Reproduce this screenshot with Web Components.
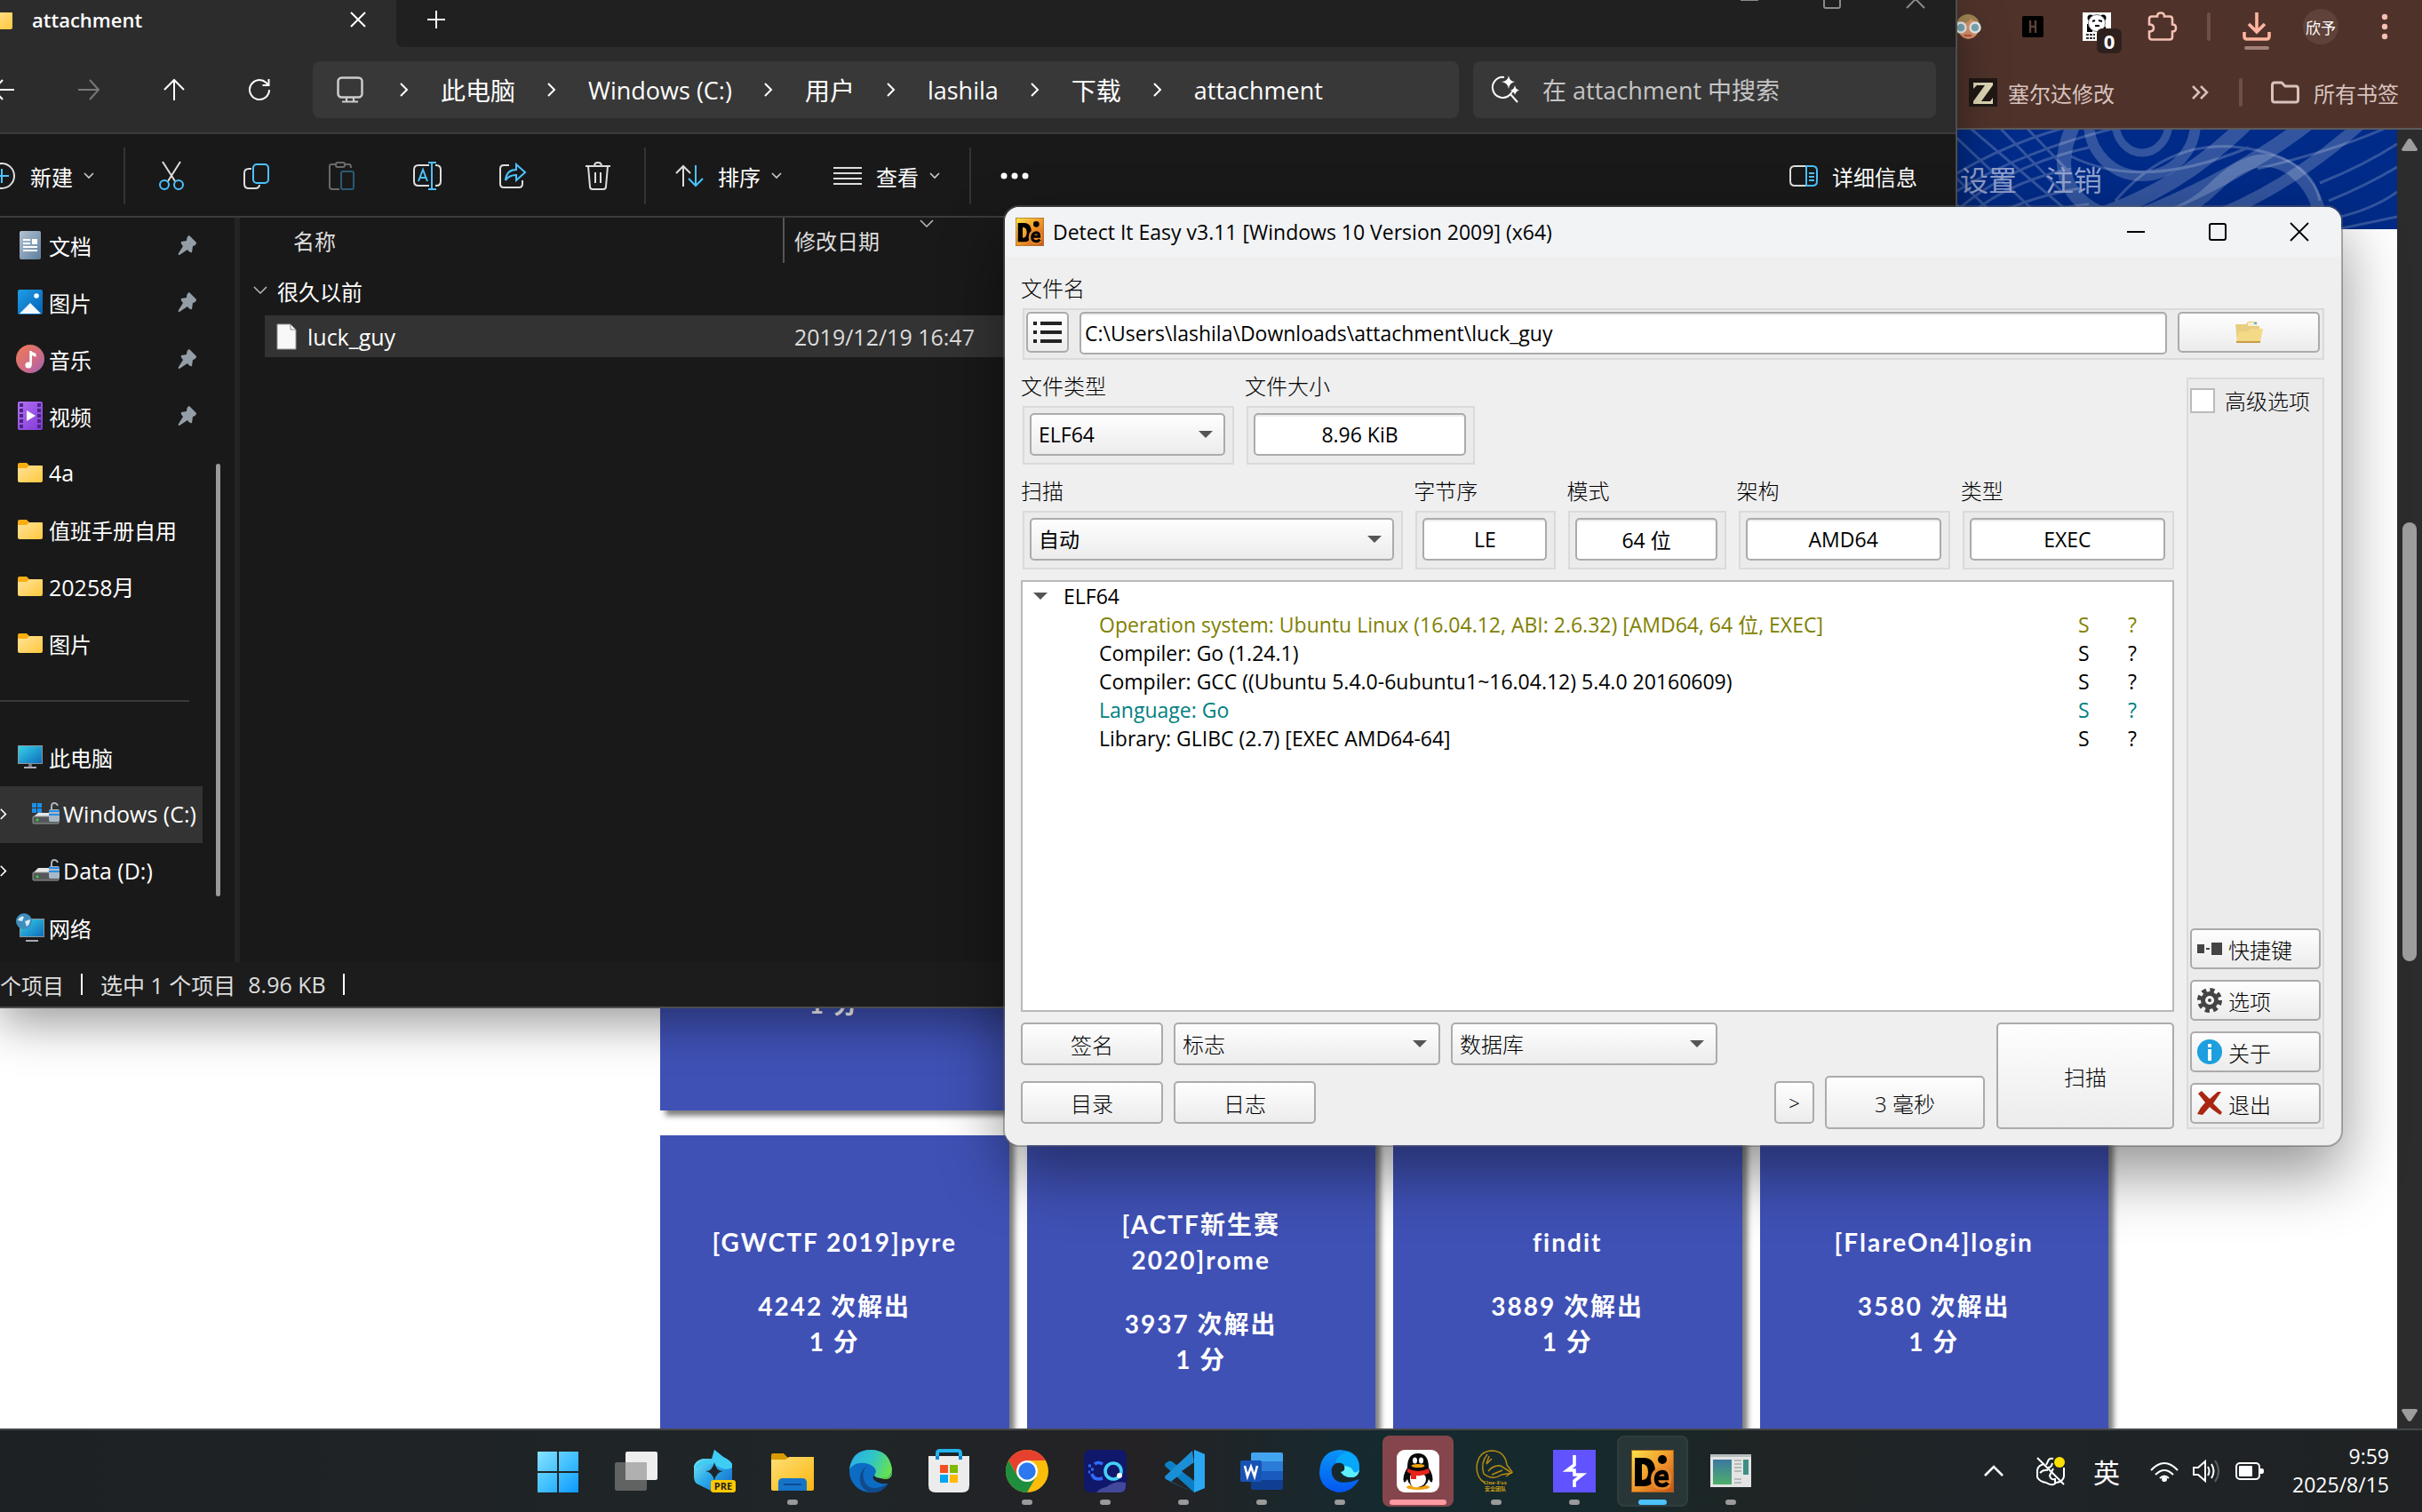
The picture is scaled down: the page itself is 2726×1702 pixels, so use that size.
<!DOCTYPE html>
<html lang="zh-CN">
<head>
<meta charset="utf-8">
<title>Desktop</title>
<style>
html,body{margin:0;height:100%}
body{font-family:"Open Sans","Noto Sans CJK SC",sans-serif;font-size:23px;overflow:hidden;background:#fff}
</style>
</head>
<body>
<desk-top></desk-top>
<script>
const BASE = `*,*::before,*::after{box-sizing:border-box}
button,input,select{font:inherit;color:inherit;margin:0}
button{background:none;border:0;padding:0;display:flex;align-items:center;justify-content:center}
a{color:inherit;text-decoration:none}
.zh{font-size:24px}`;

function define(name, html, init) {
  const tpl = document.createElement('template');
  tpl.innerHTML = html;
  customElements.define(name, class extends HTMLElement {
    constructor() { super(); this.attachShadow({mode: 'open'}); }
    connectedCallback() {
      if (this.shadowRoot.childNodes.length) return;
      const style = document.createElement('style');
      style.textContent = BASE;
      this.shadowRoot.append(style, tpl.content.cloneNode(true));
      if (init) init(this, this.shadowRoot);
    }
  });
}

/* name: [viewBox width, viewBox height, markup] */
const W = 'fill="none" stroke="#fff" stroke-width="2"';
const G = 'fill="none" stroke="#ddd" stroke-width="2"';
const B = 'fill="none" stroke="#4cc2ff" stroke-width="2"';
const ICONS = {
  folderS:[28,22,`<path d="M0 2q0-2 2-2h8l3 3h15v8H0z" fill="#f8ae12"/><linearGradient id="a" x1="0" y1="0" x2="1" y2="1"><stop offset="0" stop-color="#ffe39a"/><stop offset="1" stop-color="#ffc83d"/></linearGradient><path d="M0 6h10l3-3h13q2 0 2 2v15q0 2-2 2H2q-2 0-2-2z" fill="url(#a)"/>`],
  x:[18,18,`<path d="M1 1l16 16M17 1L1 17" ${W}/>`],
  xgray:[22,22,`<path d="M1 1l20 20M21 1L1 21" fill="none" stroke="#8a8a8a" stroke-width="2"/>`],
  mingray:[20,22,`<path d="M0 12h20" stroke="#8a8a8a" stroke-width="2"/>`],
  maxgray:[20,22,`<rect x="1" y="1" width="18" height="20" rx="2" fill="none" stroke="#8a8a8a" stroke-width="2"/>`],
  plus:[20,20,`<path d="M0 10h20M10 0v20" ${W}/>`],
  back:[24,24,`<path d="M24 12H1M11 1L1 12l10 11" ${W}/>`],
  fwd:[24,24,`<path d="M0 12h23M13 1l10 11-10 11" fill="none" stroke="#787878" stroke-width="2"/>`],
  up:[24,24,`<path d="M12 24V1M1 12L12 1l11 11" ${W}/>`],
  refresh:[24,24,`<path d="M23 12a11 11 0 1 1-3.500-8l2 2.500M22.500 0v7h-7" ${W}/>`],
  pc:[30,30,`<rect x="1.500" y="1.500" width="27" height="22" rx="4" fill="none" stroke="#ccc" stroke-width="2.500"/><path d="M11 24v4M19 24v4M6 28.500h18" stroke="#ccc" stroke-width="2.200" fill="none"/>`],
  chev:[10,16,`<path d="M1 1l7 7-7 7" ${W}/>`],
  chevD:[12,8,`<path d="M1 1l5 5 5-5" fill="none" stroke="#ccc" stroke-width="1.600"/>`],
  chevL:[16,10,`<path d="M1 1l7 7 7-7" fill="none" stroke="#bbb" stroke-width="1.500"/>`],
  search:[32,32,`<path d="M15 2A11.500 11.500 0 1 0 22 21l8 9M22 21l3-4" ${W}/><path d="M20 0q1 7 7 7-6 1-7 8-1-7-8-8 7 0 8-7zM27 11q1 5 5 5.500-4 1-5 5.500-1-4.500-5-5.500 4-.5 5-5.500z" fill="#fff"/>`],
  newc:[32,32,`<circle cx="16" cy="16" r="14" ${G}/><path d="M8 16h16M16 8v16" ${B}/>`],
  cut:[30,32,`<path d="M5 0l14 22M25 0L11 22" ${G}/><circle cx="7" cy="26" r="5" ${B}/><circle cx="23" cy="26" r="5" ${B}/>`],
  copy:[30,30,`<path d="M9 7H6q-5 0-5 5v12q0 5 5 5h7q5 0 5-4" ${G}/><rect x="11" y="2" width="17" height="21" rx="4" ${B}/>`],
  paste:[30,32,`<path d="M8 3H3q-2 0-2 2v23q0 3 3 3h8M18 3h5q2 0 2 4" fill="none" stroke="#6a6a6a" stroke-width="2"/><rect x="8" y="1" width="10" height="5" rx="2" fill="none" stroke="#6a6a6a" stroke-width="2"/><rect x="14" y="11" width="14" height="20" rx="2" fill="none" stroke="#2b5a73" stroke-width="2"/>`],
  rename:[32,32,`<path d="M18 4H6q-5 0-5 5v13q0 5 5 5h12M25 4h1q5 0 5 5v13q0 5-5 5h-1" ${G}/><path d="M6 22L11 9l5 13M8 18h7M21 1v30M17 1h9M17 31h9" ${B}/>`],
  share:[32,30,`<path d="M12 3H6q-4 0-4 4v17q0 4 4 4h17q4 0 4-4v-4" ${G}/><path d="M8 20q1-12 12-12V2l10 9-10 9v-6q-8 0-12 6z" ${B}/>`],
  trash:[30,32,`<path d="M1 5h28M4 5l2 23q0 3 3 3h12q3 0 3-3l2-23M11 5q0-4 4-4t4 4M12 12v12M18 12v12" ${G}/>`],
  sort:[32,24,`<path d="M9 24V1M1 9l8-8 8 8" ${G}/><path d="M23 0v23M15 15l8 8 8-8" ${B}/>`],
  list:[32,22,`<path d="M0 2h32M0 8h32M0 14h32M0 20h32" ${G}/>`],
  dots:[32,8,`<circle cx="4" cy="4" r="3.500" fill="#fff"/><circle cx="16" cy="4" r="3.500" fill="#fff"/><circle cx="28" cy="4" r="3.500" fill="#fff"/>`],
  details:[32,24,`<path d="M19 1H6Q1 1 1 6v12q0 5 5 5h13" ${G}/><path d="M19 1h7q5 0 5 5v12q0 5-5 5h-7zM22 9h6M22 13h6M22 17h6" ${B}/>`],
  pin:[22,22,`<path d="M13 0l8 8q0 3-4 4l-1 7q-3 1-5-3l-9 6q-2 0-1-2l5-8q-3-3-2-5l6-1q0-5 3-6z" fill="#949ea6"/>`],
  doc:[24,32,`<linearGradient id="a" x1="0" y1="0" x2="1" y2="1"><stop offset="0" stop-color="#b4c3d3"/><stop offset="1" stop-color="#5d7f9f"/></linearGradient><rect width="24" height="32" rx="2" fill="url(#a)"/><path d="M4 10h8M4 14h8M4 18h16M4 22h16" stroke="#fff" stroke-width="2"/><rect x="14" y="9" width="6" height="6" fill="#fff"/>`],
  pic:[28,28,`<linearGradient id="a" x1="0" y1="0" x2="1" y2="1"><stop offset="0" stop-color="#1f9ee8"/><stop offset="1" stop-color="#0461b4"/></linearGradient><rect width="28" height="28" rx="2" fill="url(#a)"/><path d="M2 27l12-12 12 12z" fill="#f1f8fe"/><circle cx="21" cy="7" r="2.800" fill="#fff"/>`],
  music:[32,32,`<linearGradient id="a" x1="0" y1="0" x2="1" y2="1"><stop offset="0" stop-color="#ee7d51"/><stop offset=".6" stop-color="#cf6a86"/><stop offset="1" stop-color="#9a60ba"/></linearGradient><circle cx="16" cy="16" r="16" fill="url(#a)"/><path d="M15.500 7l7 3v4l-4.500-2v10" fill="#fff"/><path d="M16.500 7v16" stroke="#fff" stroke-width="2.400"/><circle cx="14" cy="23" r="3.600" fill="#fff"/>`],
  video:[28,32,`<linearGradient id="a" x1="0" y1="0" x2="1" y2="1"><stop offset="0" stop-color="#b171f2"/><stop offset="1" stop-color="#8139d6"/></linearGradient><rect width="28" height="32" rx="2" fill="url(#a)"/><path d="M4 2v28M24 2v28" stroke="#4c2485" stroke-width="4" stroke-dasharray="4 2"/><path d="M10 10l10 6-10 6z" fill="#fff"/>`],
  monitor:[28,26,`<linearGradient id="a" x1="0" y1="0" x2="1" y2="1"><stop offset="0" stop-color="#35d2e6"/><stop offset="1" stop-color="#0e6cbd"/></linearGradient><rect width="28" height="21" fill="#8d959c"/><rect x="1" y="1" width="26" height="19" fill="url(#a)"/><path d="M12 21h4v3h-4z" fill="#777"/><path d="M7 25h14" stroke="#aab" stroke-width="2"/>`],
  driveC:[32,26,`<path d="M0 1h5v5H0zM6 1h5v5H6zM0 7h5v5H0zM6 7h5v5H6z" fill="#1b90e8"/><path d="M7 12h18l5 4H2z" fill="#e4e6e8"/><rect x="1" y="16" width="29" height="8" rx="1" fill="#55585a" stroke="#999"/><circle cx="6" cy="20" r="1.400" fill="#2edc3a"/><path d="M22 8V5q0-4 3-4t4 3" fill="none" stroke="#aab4bd" stroke-width="2"/><rect x="19" y="8" width="12" height="14" rx="2" fill="#a9b8c6"/><path d="M19 10h12M19 14h12" stroke="#2b8fe0" stroke-width="2"/>`],
  driveD:[32,26,`<path d="M7 10h18l5 5H2z" fill="#e4e6e8"/><rect x="1" y="15" width="29" height="9" rx="1" fill="#55585a" stroke="#999"/><circle cx="6" cy="20" r="1.400" fill="#2edc3a"/><path d="M22 8V5q0-4 3-4t4 3" fill="none" stroke="#aab4bd" stroke-width="2"/><rect x="19" y="8" width="12" height="14" rx="2" fill="#a9b8c6"/><path d="M19 10h12M19 14h12" stroke="#2b8fe0" stroke-width="2"/>`],
  net:[32,32,`<linearGradient id="a" x1="0" y1="0" x2="1" y2="1"><stop offset="0" stop-color="#35d2e6"/><stop offset="1" stop-color="#0e6cbd"/></linearGradient><rect x="4" y="6" width="28" height="21" fill="#8d959c"/><rect x="5" y="7" width="26" height="19" fill="url(#a)"/><path d="M11 31h14" stroke="#aab" stroke-width="2"/><circle cx="9" cy="9" r="9" fill="#3f8dbb"/><path d="M2 8q3-6 7-4l-2 5zM10 9l6-2q0 5-4 8z" fill="#d9edf5"/>`],
  file:[23,30,`<path d="M1 1h15l6 6v22H1z" fill="#f8f8f8" stroke="#999"/><path d="M16 1v6h6z" fill="#fff" stroke="#888"/>`],
  de:[48,48,`<linearGradient id="a" x1="0" y1="0" x2="1" y2="1"><stop offset="0" stop-color="#ffe34a"/><stop offset=".5" stop-color="#f0982a"/><stop offset="1" stop-color="#c8501c"/></linearGradient><rect x=".5" y=".5" width="47" height="47" fill="url(#a)" stroke="#a2641a"/><path fill-rule="evenodd" d="M4 9h10q13 0 13 16T14 41H4zM12 16v18q7 0 7-9t-7-9z" fill="#000"/><circle cx="35" cy="11" r="5" fill="#000"/><path d="M28 34h13q1-10-7-10-8 1-8 9 0 8 9 8 4 0 7-3" fill="none" stroke="#e88a2a" stroke-width="8"/><path d="M29 32h11q0-7-5-7-7 1-7 8 0 7 7 7 4 0 6-3" fill="none" stroke="#000" stroke-width="4.500"/>`],
  min:[20,20,`<path d="M0 10h20" stroke="#000" stroke-width="2"/>`],
  max:[20,20,`<rect x="1" y="1" width="18" height="18" rx="2" fill="none" stroke="#000" stroke-width="2"/>`],
  close:[20,20,`<path d="M0 0l20 20M20 0L0 20" stroke="#000" stroke-width="1.800"/>`],
  bullets:[32,26,`<path d="M0 3h4M0 13h4M0 23h4M8 3h24M8 13h24M8 23h24" stroke="#222" stroke-width="4"/>`],
  openf:[32,26,`<path d="M1 4h12l2-3h10v5h3v18H3z" fill="#e9cd7f"/><path d="M15 2h11v4H15z" fill="#f7efd0"/><path d="M22 2h3v2h-3z" fill="#4ab8e0"/><path d="M5 12h10l3-3h14l-3 15H2z" fill="#f4d987"/><path d="M2 24h27" stroke="#c79c45" stroke-width="2"/>`],
  tri:[16,8,`<path d="M0 0h16L8 8z" fill="#555"/>`],
  keys:[28,14,`<path d="M0 2h8v10H0zM10 6h4v2h-4zM16 0h12v14H16z" fill="#444"/>`],
  gear:[28,28,`<circle cx="14" cy="14" r="11.500" fill="none" stroke="#444" stroke-width="5" stroke-dasharray="5 4.030"/><circle cx="14" cy="14" r="7.500" fill="none" stroke="#444" stroke-width="5"/><circle cx="14" cy="14" r="2" fill="#444"/>`],
  info:[28,28,`<circle cx="14" cy="14" r="14" fill="#1d9fe0"/><path d="M12 5h4v4h-4zM12 11h4v13h-4z" fill="#fff"/>`],
  redx:[28,28,`<path d="M5 0q6 6 9 9L23 1l4 0L18 14l10 10-2 3Q18 22 14 18L6 27l-6-1q3-7 9-13L1 3z" fill="#a92710"/>`],
  girl:[32,30,`<circle cx="15" cy="14" r="13" fill="#a08653"/><path d="M3 12q12 0 15-6 7 4 9 9 0 13-12 14Q3 27 3 12z" fill="#de9468"/><circle cx="7" cy="16" r="5.500" fill="#7fa9b3" stroke="#e8eef0" stroke-width="2.500"/><circle cx="23" cy="16" r="5.500" fill="#7fa9b3" stroke="#e8eef0" stroke-width="2.500"/><path d="M11 25h8" stroke="#b05a48" stroke-width="2"/>`],
  hbox:[24,24,`<rect width="24" height="24" rx="2" fill="#000"/><path d="M9 5v14M15 5v14M9 12h6" stroke="#5a4238" stroke-width="2.400"/>`],
  panda:[32,32,`<rect width="32" height="32" fill="#fff"/><circle cx="9" cy="6" r="3.500"/><circle cx="23" cy="6" r="3.500"/><path d="M5 13h6v9H5zM20 16h6v6h-6z"/><circle cx="16" cy="12" r="9.500" fill="#fff" stroke="#777"/><path d="M11 10l3-1M18 9l4 1M14 15h5" stroke="#000" stroke-width="2"/><path d="M4 25h10M4 29h10" stroke="#333" stroke-width="2" stroke-dasharray="3 1"/>`],
  puzzle:[32,32,`<path d="M4 5h6q0-4 4-4t4 4h6q3 0 3 3v6q4 0 4 4t-4 4v6q0 3-3 3H4q-3 0-3-3v-6q5 0 5-4t-5-4V8q0-3 3-3z" transform="translate(0 -.5)" fill="none" stroke="#f5bfb2" stroke-width="2.600"/>`],
  dl:[32,42,`<path d="M16 0v21M7 13l9 9 9-9M2 22v5q0 3 3 3h22q3 0 3-3v-5" fill="none" stroke="#ffb59f" stroke-width="3.600"/><rect x="2" y="38" width="28" height="4" rx="2" fill="#a08078"/>`],
  vdots:[8,30,`<circle cx="4" cy="4" r="3.200" fill="#f5bfb2"/><circle cx="4" cy="15" r="3.200" fill="#f5bfb2"/><circle cx="4" cy="26" r="3.200" fill="#f5bfb2"/>`],
  zelda:[32,32,`<rect width="32" height="32" fill="#201815"/><path d="M5 5h22v3L14 26h10l3-4v7H5v-3L18 8H9l-4 4z" fill="#ded8b6"/>`],
  dchev:[20,16,`<path d="M2 1l7 7-7 7M11 1l7 7-7 7" fill="none" stroke="#d8c2bc" stroke-width="2.500"/>`],
  bfolder:[32,26,`<path d="M4 2h8l4 4h12q2.500 0 2.500 3v12q0 3-2.500 3H4q-2.500 0-2.500-3V5q0-3 2.500-3z" fill="none" stroke="#d8c2bc" stroke-width="3"/>`],
  sbUp:[18,14,`<path d="M7 1q2-2 4 0l7 11q0 2-2 2H2q-2 0-2-2z" fill="#9d9d9d"/>`],
  sbDn:[18,14,`<path d="M7 13q2 2 4 0l7-11q0-2-2-2H2Q0 0 0 2z" fill="#9d9d9d"/>`],
  start:[48,48,`<linearGradient id="a" gradientUnits="userSpaceOnUse" x1="0" y1="0" x2="48" y2="48"><stop offset="0" stop-color="#8de4ff"/><stop offset=".5" stop-color="#45c2ff"/><stop offset="1" stop-color="#0a97ff"/></linearGradient><path d="M1 2h22v22H1zM25 2h22v22H25zM1 26h22v22H1zM25 26h22v22H25z" fill="url(#a)"/>`],
  tview:[48,48,`<rect x="12" y="2" width="36" height="32" rx="2" fill="#eee"/><rect x="0" y="14" width="36" height="32" rx="2" fill="#6d6d6d" fill-opacity=".85"/><path d="M12 14h24v20H12z" fill="#b0b0b0"/>`],
  copilot:[48,48,`<linearGradient id="a" x1="0" y1="0" x2="1" y2="1"><stop offset="0" stop-color="#8af5f8"/><stop offset=".5" stop-color="#2aa9e8"/><stop offset="1" stop-color="#1462c8"/></linearGradient><path d="M24 0l10 8q8 4 10 8v20L24 48 4 38q-3-3-3-8V18q2-6 10-8h10z" fill="url(#a)"/><path d="M24 0l10 8q8 4 10 8v4q-8 5-20-4-10-2-22 6 2-8 10-10h9q3-3 3-12z" fill="#40cdf4"/><path d="M24 14q2 10 10 10-8 1-10 11-2-10-10-11 8 0 10-10z" fill="#1f2427"/><rect x="20" y="34" width="28" height="14" rx="3" fill="#ffc800"/><text x="34" y="45" font-family="Open Sans" font-weight="700" font-size="11" text-anchor="middle" fill="#222">PRE</text>`],
  explorer:[48,48,`<path d="M0 6q0-2 2-2h12l5 5h27v12H0z" fill="#d99a05"/><linearGradient id="a" x1="0" y1="0" x2="1" y2="1"><stop offset="0" stop-color="#ffdf76"/><stop offset="1" stop-color="#fbb60f"/></linearGradient><path d="M0 11h16l4-3h28v36q0 2-2 2H2q-2 0-2-2z" fill="url(#a)"/><path d="M8 46V37q0-5 5-5h22q5 0 5 5v9z" fill="#1573c8"/><path d="M14 39h20" stroke="#0a4d94" stroke-width="2"/>`],
  edge:[48,48,`<linearGradient id="a" x1="0" y1=".3" x2="1" y2=".6"><stop offset="0" stop-color="#2bafe8"/><stop offset=".5" stop-color="#2fc6c6"/><stop offset="1" stop-color="#6be24a"/></linearGradient><circle cx="24" cy="24" r="24" fill="#0c6cc4"/><path d="M0 22Q3 0 24 0t24 22q-1 11-13 10-6-1-7-3 4-6-1-10-7-5-16-4Q4 16 0 22z" fill="url(#a)"/><path d="M20 18q-8 8-2 20 8 10 26 0Q36 50 22 48 8 40 13 26q2-5 7-8z" fill="#114a8b"/><path d="M28 29q1 3 7 3 13 1 13-7l2 12-7 1q-10 1-15-4-3-3 0-5z" fill="#1f2427"/><path d="M35 32q13 1 13-9v4q-1 6-8 6z" fill="#6be24a"/>`],
  store:[48,48,`<path d="M11 12V4q0-3 3-3h20q3 0 3 3v8" fill="none" stroke="#21b4ee" stroke-width="4"/><path d="M1 7h46v33q0 8-8 8H9q-8 0-8-8z" fill="#ececec"/><path d="M11 7v4M37 7v4" stroke="#0b86d8" stroke-width="4"/><path d="M14 17h9v9h-9z" fill="#f25022"/><path d="M25 17h9v9h-9z" fill="#7fba00"/><path d="M14 28h9v9h-9z" fill="#00a4ef"/><path d="M25 28h9v9h-9z" fill="#ffb900"/>`],
  chrome:[48,48,`<circle cx="24" cy="24" r="24" fill="#fbbc0a"/><path d="M3.200 12A24 24 0 0 1 44.800 12H24L14 30z" fill="#e8402f"/><path d="M3.200 12A24 24 0 0 0 24 48L34.400 30H13.600z" fill="#1f8e3e"/><circle cx="24" cy="24" r="12" fill="#fff"/><circle cx="24" cy="24" r="9.700" fill="#2b78f0"/>`],
  co:[48,48,`<rect width="48" height="48" rx="7" fill="#10186b"/><path d="M25 42q10-8 22-5v4q0 7-7 7H14q4-5 11-6z" fill="#43499a"/><circle cx="33" cy="24" r="9" fill="none" stroke="#44d0f8" stroke-width="3.600"/><path d="M21 16q-5-3-9 0M9 27q2 8 12 5" fill="none" stroke="#2f6bff" stroke-width="3.600"/><path d="M5 18h3M8 22h3M5 25h2" stroke="#2f6bff" stroke-width="3"/><circle cx="40" cy="29" r="3" fill="#fff"/>`],
  vscode:[48,48,`<path d="M36 0l12 5v38l-12 5L4 19q-2-2 0-4l3-2q2-1 4 0l25 20z" fill="#0d7fc4"/><path d="M36 48L4 33q-2-3 0-4L34 1l2 14L11 35q-2 1-4 0" fill="#1b8fd6"/><path d="M36 14L22 24l14 11z" fill="#1e2629"/><path d="M36 0l12 5v38l-12 5z" fill="#2ba8f2"/>`],
  word:[48,48,`<path d="M12 5q0-2 2-2h32q2 0 2 2v9H12z" fill="#42a3ee"/><path d="M12 13h36v11H12z" fill="#2b7cd6"/><path d="M12 24h36v10H12z" fill="#185abd"/><path d="M12 34h36v9q0 2-2 2H14q-2 0-2-2z" fill="#103f91"/><rect x="0" y="12" width="24" height="24" rx="2" fill="#1753b4"/><path d="M5 18l3 12 4-11 4 11 3-12" fill="none" stroke="#fff" stroke-width="2.600"/>`],
  ie:[48,48,`<linearGradient id="a" x1="0" y1="0" x2="0" y2="1"><stop offset="0" stop-color="#0a95f6"/><stop offset="1" stop-color="#0456f0"/></linearGradient><path d="M24 0q22 1 22 20 0 11-9 11-8 0-12-6 6-1 4-7-2-5-9-3-8 4-4 15 6 12 30 3Q38 48 22 48 2 44 1 26 2 1 24 0z" fill="url(#a)"/><path d="M19 15q2-10 14-13 13 6 13 18 0 11-9 11-8 0-12-6 6-1 4-7-2-5-10-3z" fill="#06a8fb"/><path d="M29 18q9 1 10 6 3 4 7-2-1 9-9 9-8 0-12-6 6-1 4-7z" fill="#5ef0fa"/>`],
  qq:[48,48,`<rect width="48" height="48" rx="9" fill="#fff"/><ellipse cx="24" cy="42" rx="13" ry="3" fill="#f3a20a"/><path d="M24 4q12 0 12 16 6 10 4 16-1 2-4-3-2 9-12 9t-12-9q-3 5-4 3-2-6 4-16Q12 4 24 4z" fill="#0a0a0a"/><path d="M24 26q9 0 9 7t-9 9-9-9 9-7z" fill="#fff"/><ellipse cx="20.500" cy="12" rx="2.500" ry="3.500" fill="#fff"/><ellipse cx="27.500" cy="12" rx="2.500" ry="3.500" fill="#fff"/><ellipse cx="24" cy="18" rx="7.500" ry="2" fill="#f3a20a"/><path d="M12 21q12 6 24 0l1 5q-8 4-15 3v4h-6v-6l-4-2z" fill="#e8231c"/>`],
  onefox:[48,48,`<g fill="none" stroke="#b48a12" stroke-width="1.500"><path d="M11 37Q2 32 2 19 4 1 20 1q14 1 16 16l6 8-7 5"/><path d="M14 5q-8 10-4 22 10 8 20 1l12-2M15 24q6-7 14-6l11 7M16 7l-3 9 6-6M19 28l12-5"/></g><text x="23" y="39" font-size="7" font-weight="700" font-family="Liberation Serif" text-anchor="middle" fill="#c39a16">One-Fox</text><text x="23" y="46" font-size="6" font-weight="700" font-family="Noto Sans CJK SC" text-anchor="middle" fill="#c39a16">安全团队</text>`],
  bolt:[48,48,`<rect width="48" height="48" fill="#6153ff"/><path d="M24 6v11l-8 6h8v5h9l-9 7v7" fill="none" stroke="#fff" stroke-width="3.600"/>`],
  app:[48,48,`<rect x="1" y="5" width="46" height="37" fill="#e3e4e4"/><path d="M1 5h46v3H1z" fill="#b8bdc2"/><linearGradient id="a" x1="0" y1="0" x2="0" y2="1"><stop offset="0" stop-color="#3b78a0"/><stop offset="1" stop-color="#4fae6b"/></linearGradient><rect x="4" y="11" width="21" height="28" fill="url(#a)"/><path d="M28 12h8M28 16h8M28 20h8M28 24h8M28 33h8M28 37h8" stroke="#aaa" stroke-width="1.500"/><rect x="38" y="11" width="6" height="17" fill="#3d8f85"/>`],
  tup:[22,14,`<path d="M1 12L11 2l10 10" fill="none" stroke="#fff" stroke-width="2.600"/>`],
  cop:[32,32,`<path d="M19 2q-5-1-6 3l-2 4M9 8q-7 1-8 7v8q3 5 10 6 6 4 10 1v-5q-5 1-6-4l4-8M22 29q8-1 9-7V12M4 18q4-4 9-3M13 12q4 0 5-5" ${W}/><path d="M1 1l30 30" ${W}/><circle cx="26" cy="6" r="6" fill="#ffe100"/>`],
  wifi:[32,24,`<path d="M1 11q15-16 30 0M6 16q10-10 20 0M11 20q5-5 10 0" ${W}/><circle cx="16" cy="21" r="3" fill="#fff"/>`],
  vol:[32,28,`<path d="M1 10h5l8-7v22l-8-7H1zM17 9q3 5 0 10M21 6q5 8 0 16" ${W}/><path d="M25 2q8 12 0 24" fill="none" stroke="#5a5e60" stroke-width="2"/>`],
  batt:[32,22,`<rect x="1" y="2" width="26" height="18" rx="4" ${W}/><rect x="4" y="5" width="15" height="12" rx="1" fill="#fff"/><path d="M28 8h2q2 0 2 3t-2 3h-2z" fill="#fff"/>`]
};
customElements.define('ui-icon', class extends HTMLElement {
  connectedCallback() {
    if (this.shadowRoot) return;
    const [w, h, body] = ICONS[this.getAttribute('name')];
    const s = this.getAttribute('size');
    const width = s ? +s : w, height = s ? +s * h / w : h;
    this.attachShadow({mode: 'open'}).innerHTML =
      `<style>:host{display:block;flex:none;line-height:0}svg{display:block;overflow:visible}</style>
       <svg width="${width}" height="${height}" viewBox="0 0 ${w} ${h}" aria-hidden="true">${body}</svg>`;
  }
});

/* ---------- browser behind the windows ---------- */
define('challenge-card', `<style>
:host{display:block;height:352px}
button{width:100%;height:100%;flex-direction:column;background:#3f51b5;color:#fff;box-shadow:6px 6px 6px rgba(0,0,0,.5);
 font:700 28px/40px Lato,"Noto Sans CJK SC",sans-serif;letter-spacing:2px;gap:32px;padding:0}
span{display:block}
</style><button type="button"><span><slot name="title"></slot></span><span><slot></slot></span></button>`);

define('browser-window', `<style>
:host{display:flex;flex-direction:column;min-height:0;overflow:hidden;background:#fff}
header{background:#4f332b;height:146px;flex:none;border-bottom:2px solid #5d5a5a;color:#d8c2bc}
.row{display:flex;justify-content:flex-end;align-items:center}
.ext{height:60px;padding-right:38px}
.marks{height:88px;padding-right:26px}
.badge{display:grid;width:44px;height:46px;margin-top:14px}
.badge>*{grid-area:1/1}
.badge b{align-self:end;justify-self:end;width:28px;height:28px;border-radius:6px;background:#2e211d;color:#fff;text-align:center;font-size:22px;line-height:28px;z-index:1}
.badge ui-icon{align-self:start}
i{display:block;width:4px;height:32px;background:#6f4e45;border-radius:2px}
.me{width:40px;height:40px;border-radius:20px;background:#5f423a;color:#fff;font-size:17px}
a{display:flex;align-items:center;gap:12px}
.view{flex:1;display:flex;min-height:0}
main{flex:1;overflow:hidden}
.banner{height:112px;background:#002b88;display:grid}
.banner>*{grid-area:1/1}
.banner svg{justify-self:end;display:block}
.banner nav{display:flex;justify-content:flex-end;align-items:center;gap:32px;padding:0 332px 2px 0;font-size:32px;color:#93a3cf}
.cards{display:grid;grid-template-columns:repeat(4,1fr);column-gap:20px;margin:0 325px 28px 743px}
.first{margin-top:640px}
.bar{width:28px;background:#2c2c2c;display:flex;flex-direction:column;align-items:center;padding:10px 0 8px}
.bar i{width:16px;height:494px;background:#9d9d9d;border-radius:8px;margin:418px 0 auto}
</style>
<header>
 <div class="row ext">
  <ui-icon name="girl" style="margin-right:44px"></ui-icon>
  <ui-icon name="hbox" style="margin-right:44px"></ui-icon>
  <span class="badge"><ui-icon name="panda"></ui-icon><b>0</b></span>
  <ui-icon name="puzzle" style="margin:0 34px 0 30px"></ui-icon><i></i>
  <ui-icon name="dl" style="margin:10px 36px 0 36px"></ui-icon>
  <button class="me" type="button">欣予</button>
  <ui-icon name="vdots" style="margin-left:48px"></ui-icon>
 </div>
 <div class="row marks zh">
  <a href="#"><ui-icon name="zelda"></ui-icon>塞尔达修改</a>
  <ui-icon name="dchev" style="margin:0 34px 0 86px"></ui-icon><i></i>
  <a href="#" style="margin-left:32px;gap:16px"><ui-icon name="bfolder"></ui-icon>所有书签</a>
 </div>
</header>
<div class="view">
 <main>
  <div class="banner">
   <svg width="497" height="112" viewBox="0 0 497 112" fill="none" stroke="#fff" stroke-opacity=".2">
    <g stroke-width="3"><path d="M0 50Q60 14 130-4M0 70Q70 26 180-2M0 92Q60 40 150 20M0 110Q50 60 130 44M20 112Q60 80 140 66M50 112Q90 90 150 84M0 8L110 112M14-4L150 112M48-4L120 70M-20 34L60 112M-20 64L30 112M80-2L130 50"/></g>
    <g stroke-width="3"><path d="M410 60Q460 40 497 16M420 80Q460 64 497 42M425 100Q470 90 497 70M340 44Q440 20 497-8M430 112L497 98"/></g>
    <path d="M150-8a54 54 0 0 0 120 0" stroke-width="12"/><path d="M180-8a30 34 0 0 0 60 0" stroke-width="9"/>
    <path d="M132-4q-20 46 0 74t70 34" stroke-width="16"/>
    <path d="M330-10Q250 70 150 100M400-10Q310 60 180 108" stroke-width="17"/><path d="M460-10Q360 80 250 112" stroke-width="13"/>
    <path d="M150 96q90 20 140-30t90-20q36 30 28 70" stroke-width="14"/>
    <path d="M180 80q60-70 140-60t90 60M130 30q80 40 200-10" stroke-width="3"/>
   </svg>
   <nav><a href="#">设置</a><a href="#">注销</a></nav>
  </div>
  <div class="cards first"><challenge-card><span slot="title">&nbsp;</span><br>1 分</challenge-card></div>
  <div class="cards">
   <challenge-card><span slot="title">[GWCTF 2019]pyre</span>4242 次解出<br>1 分</challenge-card>
   <challenge-card><span slot="title">[ACTF新生赛<br>2020]rome</span>3937 次解出<br>1 分</challenge-card>
   <challenge-card><span slot="title">findit</span>3889 次解出<br>1 分</challenge-card>
   <challenge-card><span slot="title">[FlareOn4]login</span>3580 次解出<br>1 分</challenge-card>
  </div>
 </main>
 <div class="bar"><ui-icon name="sbUp"></ui-icon><i></i><ui-icon name="sbDn"></ui-icon></div>
</div>`);

/* ---------- file explorer ---------- */
define('side-item', `<style>
:host{display:block;height:64px;margin-right:36px}
a{display:flex;height:100%;align-items:center;padding:0 6px 2px 16px;color:#fff}
:host([sel]) a{background:#333}
.ic{width:39px;display:flex;justify-content:center;padding-right:3px}
.t{flex:1;white-space:nowrap}
:host([sub]) a{padding:0 0 2px}
:host([sub]) .ic{width:36px}
.ch{width:35px}
</style><a href="#"><span class="ch" hidden></span><span class="ic"></span><span class="t"><slot></slot></span></a>`,
(el, r) => {
  r.querySelector('.ic').innerHTML = `<ui-icon name="${el.getAttribute('icon')}"></ui-icon>`;
  if (el.hasAttribute('sub')) { const c = r.querySelector('.ch'); c.hidden = false; c.innerHTML = '<ui-icon name="chev" size="8"></ui-icon>'; }
  if (el.hasAttribute('pinned')) r.querySelector('a').insertAdjacentHTML('beforeend', '<ui-icon name="pin"></ui-icon>');
});

define('explorer-window', `<style>
:host{display:block;background:#191919;color:#fff;border-right:2px solid #4d4d4d;border-bottom:2px solid #4d4d4d;overflow:hidden;box-shadow:0 16px 50px rgba(0,0,0,.4)}
.tabs{display:flex;height:53px;background:#2c2c2c;font-size:22px}
.tab{width:446px;display:flex;align-items:center;padding:0 34px 10px 0;font-weight:600}
.tab ui-icon:first-child{margin-left:-14px}
.tab span{flex:1;padding-left:22px}
.rest{flex:1;background:#202020;border-radius:0 0 0 8px;display:flex;padding:12px 34px 0 35px}
.ctl{margin-left:auto;display:flex;gap:73px;margin-top:-24px}
.nav{display:flex;align-items:center;height:98px;background:#2c2c2c;border-bottom:2px solid #3b3b3b;padding-right:22px}
.nav>button{width:96px;height:64px}
.nav>button:first-child{margin-left:-44px}
.addr{flex:1;min-width:0;height:64px;background:#383838;border-radius:8px;margin:0 16px 0 12px;display:flex;align-items:center;gap:36px;padding-left:27px;font-size:27px;white-space:nowrap}
.addr .z{font-size:28px}
.addr ui-icon:first-child{margin-right:5px}
.find{flex:0 0 521px;height:64px;background:#383838;border-radius:8px;display:flex;align-items:center;padding-left:20px;gap:26px;font-size:27px}
.find input{flex:1;min-width:0;background:none;border:0;padding:0;outline:0}
.find input::placeholder{color:#c5c5c5;opacity:1}
.tools{display:flex;align-items:center;height:94px;border-bottom:2px solid #3b3b3b;padding-top:2px}
.tools button{padding:0 29px;gap:16px;height:64px}
.tools button .c{margin-left:-4px}
.tools .sq{width:96px;padding:0}
.tools i{width:2px;height:64px;background:#333;margin:0 4px}
.tools button:first-child{margin-left:-43px}
.tools button:last-child{margin-left:auto;padding-right:43px}
.mid{display:flex;height:838px;font-size:25px}
.mid .zh{font-size:24px}
aside{width:264px;position:relative}
.sep{height:64px;width:213px;display:flex;align-items:center}
.sep hr{flex:1;border:0;height:2px;background:#3a3a3a;margin:0}
.thumb{position:absolute;right:16px;top:277px;width:5px;height:487px;border-radius:3px;background:#9a9a9a}
.files{flex:1;border-left:6px solid #242424;position:relative}
table{border-collapse:collapse;width:100%;table-layout:fixed}
th,td{padding:0;text-align:left;font-weight:400}
th{height:51px;color:#ddd}
th:first-child{width:612px;padding-left:60px;border-right:2px solid #555}
th:last-child{padding-left:11px}
.grp td{height:59px;padding:3px 0 0 15px}
.fl{display:flex;align-items:center;gap:11px}
.fl .in{margin-left:28px;padding-left:13px;background:#333;height:47px;flex:1;display:flex;align-items:center;gap:12px}
.row td+td{background:#333;padding-left:12px;color:#ddd}
.row td{height:47px}
.srt{position:absolute;left:765px;top:2px}
footer{height:50px;display:flex;align-items:center;color:#ddd;background:#1c1c1c;font-size:25px}
footer i{width:2px;height:24px;background:#fff;margin:0 20px 0 19px}
</style>
<div class="tabs"><div class="tab"><ui-icon name="folderS"></ui-icon><span>attachment</span><button type="button" aria-label="Close tab"><ui-icon name="x"></ui-icon></button></div>
 <div class="rest"><ui-icon name="plus"></ui-icon><div class="ctl"><ui-icon name="mingray"></ui-icon><ui-icon name="maxgray"></ui-icon><ui-icon name="xgray"></ui-icon></div></div></div>
<div class="nav">
 <button type="button" aria-label="Back"><ui-icon name="back"></ui-icon></button><button type="button" aria-label="Forward"><ui-icon name="fwd"></ui-icon></button><button type="button" aria-label="Up"><ui-icon name="up"></ui-icon></button><button type="button" aria-label="Refresh"><ui-icon name="refresh"></ui-icon></button>
 <div class="addr"><ui-icon name="pc"></ui-icon><ui-icon name="chev"></ui-icon><a href="#" class="z">此电脑</a><ui-icon name="chev"></ui-icon><a href="#">Windows (C:)</a><ui-icon name="chev"></ui-icon><a href="#" class="z">用户</a><ui-icon name="chev"></ui-icon><a href="#">lashila</a><ui-icon name="chev"></ui-icon><a href="#" class="z">下载</a><ui-icon name="chev"></ui-icon><a href="#">attachment</a></div>
 <div class="find"><ui-icon name="search"></ui-icon><input type="text" aria-label="Search" placeholder="在 attachment 中搜索"></div>
</div>
<div class="tools zh">
 <button type="button"><ui-icon name="newc"></ui-icon>新建<ui-icon class="c" name="chevD"></ui-icon></button><i></i>
 <button class="sq" type="button" aria-label="Cut"><ui-icon name="cut"></ui-icon></button><button class="sq" type="button" aria-label="Copy"><ui-icon name="copy"></ui-icon></button><button class="sq" type="button" aria-label="Paste"><ui-icon name="paste"></ui-icon></button><button class="sq" type="button" aria-label="Rename"><ui-icon name="rename"></ui-icon></button><button class="sq" type="button" aria-label="Share"><ui-icon name="share"></ui-icon></button><button class="sq" type="button" aria-label="Delete"><ui-icon name="trash"></ui-icon></button><i></i>
 <button type="button"><ui-icon name="sort"></ui-icon>排序<ui-icon class="c" name="chevD"></ui-icon></button><button type="button"><ui-icon name="list"></ui-icon>查看<ui-icon class="c" name="chevD"></ui-icon></button><i></i>
 <button type="button" aria-label="More"><ui-icon name="dots"></ui-icon></button>
 <button type="button"><ui-icon name="details"></ui-icon>详细信息</button>
</div>
<div class="mid">
 <aside>
  <side-item class="zh" icon="doc" pinned>文档</side-item><side-item class="zh" icon="pic" pinned>图片</side-item><side-item class="zh" icon="music" pinned>音乐</side-item><side-item class="zh" icon="video" pinned>视频</side-item>
  <side-item icon="folderS">4a</side-item><side-item class="zh" icon="folderS">值班手册自用</side-item><side-item icon="folderS">20258月</side-item><side-item class="zh" icon="folderS">图片</side-item>
  <div class="sep"><hr></div>
  <side-item class="zh" icon="monitor">此电脑</side-item><side-item sub sel icon="driveC">Windows (C:)</side-item><side-item sub icon="driveD">Data (D:)</side-item><side-item class="zh" icon="net">网络</side-item>
  <div class="thumb"></div>
 </aside>
 <div class="files">
  <table>
   <tr class="zh"><th>名称</th><th>修改日期</th></tr>
   <tr class="grp zh"><td colspan="2"><span class="fl"><ui-icon name="chevL"></ui-icon>很久以前</span></td></tr>
   <tr class="row"><td><span class="fl"><span class="in"><ui-icon name="file"></ui-icon>luck_guy</span></span></td><td>2019/12/19 16:47</td></tr>
  </table>
  <ui-icon class="srt" name="chevL"></ui-icon>
 </div>
</div>
<footer><span class="zh">个项目</span><i></i><span>选中 1 个项目</span><span style="margin-left:14px">8.96 KB</span><i></i></footer>`);

/* ---------- Detect It Easy ---------- */
define('die-button', `<style>
:host{display:block;height:48px}
button{width:100%;height:100%;border:2px solid #ababab;border-radius:5px;background:linear-gradient(#fefefe,#ececec);color:#000;gap:7px}
:host([icon]) button{justify-content:flex-start;padding-left:6px}
:host([center]) button{justify-content:center;padding:0}
</style><button type="button"><slot></slot></button>`, (el, r) => {
  if (el.hasAttribute('icon')) r.querySelector('button').insertAdjacentHTML('afterbegin', `<ui-icon name="${el.getAttribute('icon')}"></ui-icon>`);
  if (el.hasAttribute('label')) r.querySelector('button').setAttribute('aria-label', el.getAttribute('label'));
});
define('die-select', `<style>
:host{display:grid;height:48px}
select,ui-icon{grid-area:1/1}
select{appearance:none;width:100%;height:100%;border:2px solid #ababab;border-radius:5px;background:linear-gradient(#fefefe,#ececec);color:#000;padding:0 8px}
ui-icon{justify-self:end;align-self:center;margin-right:15px;pointer-events:none}
</style><select><option></option></select><ui-icon name="tri"></ui-icon>`, (el, r) => {
  r.querySelector('option').textContent = el.getAttribute('value');
  r.querySelector('select').setAttribute('aria-label', el.getAttribute('label') || el.getAttribute('value'));
});
define('die-field', `<style>
:host{display:flex;flex-direction:column;gap:4px}
label{font-size:24px;line-height:36px;font-weight:300}
.f{margin-left:2px;border:2px solid #dadada;background:#ebebeb;height:66px;padding:6px 8px 8px 6px;display:grid}
input{width:100%;height:48px;border:2px solid #ababab;border-radius:5px;background:#fff;text-align:center;padding:0;outline:0;box-shadow:inset 0 2px #eee}
select{appearance:none;width:100%;height:48px;border:2px solid #ababab;border-radius:5px;background:linear-gradient(#fefefe,#ececec);padding:0 8px}
select,ui-icon{grid-area:1/1}
ui-icon{justify-self:end;align-self:center;margin-right:14px}
</style><label for="c"></label><div class="f"></div>`, (el, r) => {
  const v = el.getAttribute('value'), f = r.querySelector('.f');
  r.querySelector('label').textContent = el.getAttribute('label');
  f.innerHTML = el.hasAttribute('combo')
    ? `<select id="c"><option>${v}</option></select><ui-icon name="tri"></ui-icon>`
    : `<input id="c" type="text" readonly value="${v}">`;
});

define('die-window', `<style>
:host{display:block;border:2px solid rgba(90,90,90,.5);border-radius:18px;background:#efefef;background-clip:padding-box;color:#000;box-shadow:0 30px 70px rgba(0,0,0,.42)}
.title{height:56px;background:#f1f3f5;border-radius:16px 16px 0 0;display:flex;align-items:center;gap:10px;padding:0 37px 0 12px}
.title span{flex:1}
.title nav{display:flex;gap:72px}
.body{padding:18px 19px 18px 18px;display:flex;flex-direction:column;gap:12px}
.body .zh{font-weight:300}
.name{display:flex;flex-direction:column;gap:4px}
.name label{line-height:36px}
.name .f{margin-left:2px;border:2px solid #dadada;background:#ebebeb;height:58px;padding:2px 3px 2px 2px;display:flex;gap:12px}
.name input{flex:1;height:48px;border:2px solid #ababab;border-radius:5px;padding:0 4px;background:#fff;outline:0;box-shadow:inset 0 2px #eee}
.name die-button{height:46px}
.cols{display:flex;gap:14px}
.main{flex:1;min-width:0;display:flex;flex-direction:column;gap:12px}
.r{display:flex;gap:12px}
.tree{height:486px;background:#fff;border:2px solid #b9b9b9}
table{border-collapse:collapse;width:100%}
td{height:32px;padding:0;line-height:32px}
td:first-child{padding-left:86px}
.root td:first-child{padding-left:12px}
.root span{display:flex;align-items:center;gap:18px}
td+td{width:56px}
tr td:last-child{width:50px}
.os{color:#808000}.lang{color:#008080}
.bot{display:flex;gap:13px}
.left{flex:1;display:flex;flex-direction:column;gap:12px}
.left .r+.r{height:60px;align-items:center}
.side{width:155px;margin-top:8px;border:2px solid #dadada;background:#ebebeb;display:flex;flex-direction:column;gap:12px;padding:6px 2px 4px}
.side label{display:flex;align-items:center;gap:11px;margin-bottom:auto;white-space:nowrap}
.side input{appearance:none;width:28px;height:28px;border:2px solid #bbb;background:#fff;flex:none}
.side die-button{height:46px}
</style>
<div class="title"><ui-icon name="de" size="32"></ui-icon><span>Detect It Easy v3.11 [Windows 10 Version 2009] (x64)</span><nav><button type="button" aria-label="Minimize"><ui-icon name="min"></ui-icon></button><button type="button" aria-label="Maximize"><ui-icon name="max"></ui-icon></button><button type="button" aria-label="Close"><ui-icon name="close"></ui-icon></button></nav></div>
<div class="body">
 <div class="name"><label class="zh" for="path">文件名</label><div class="f"><die-button icon="bullets" center label="History" style="width:48px"></die-button><input id="path" type="text" value="C:\\Users\\lashila\\Downloads\\attachment\\luck_guy"><die-button icon="openf" center label="Open" style="width:160px"></die-button></div></div>
 <div class="cols">
  <div class="main">
   <div class="r"><die-field style="width:240px" combo label="文件类型" value="ELF64"></die-field><die-field style="width:259px" label="文件大小" value="8.96 KiB"></die-field></div>
   <div class="r"><die-field style="flex:430" combo label="扫描" value="自动"></die-field><die-field style="flex:160" label="字节序" value="LE"></die-field><die-field style="flex:179" label="模式" value="64 位"></die-field><die-field style="flex:240" label="架构" value="AMD64"></die-field><die-field style="flex:240" label="类型" value="EXEC"></die-field></div>
   <div class="tree"><table>
    <tr class="root"><td><span><ui-icon name="tri"></ui-icon>ELF64</span></td><td></td><td></td></tr>
    <tr class="os"><td>Operation system: Ubuntu Linux (16.04.12, ABI: 2.6.32) [AMD64, 64 位, EXEC]</td><td>S</td><td>?</td></tr>
    <tr><td>Compiler: Go (1.24.1)</td><td>S</td><td>?</td></tr>
    <tr><td>Compiler: GCC ((Ubuntu 5.4.0-6ubuntu1~16.04.12) 5.4.0 20160609)</td><td>S</td><td>?</td></tr>
    <tr class="lang"><td>Language: Go</td><td>S</td><td>?</td></tr>
    <tr><td>Library: GLIBC (2.7) [EXEC AMD64-64]</td><td>S</td><td>?</td></tr>
   </table></div>
   <div class="bot zh">
    <div class="left">
     <div class="r"><die-button style="width:160px">签名</die-button><die-select style="width:300px" value="标志"></die-select><die-select style="width:300px" value="数据库"></die-select></div>
     <div class="r"><die-button style="width:160px">目录</die-button><die-button style="width:160px">日志</die-button><die-button style="width:45px;margin-left:auto;font-size:22px">&gt;</die-button><die-button style="width:180px;height:60px">3 毫秒</die-button></div>
    </div>
    <die-button style="width:200px;height:120px">扫描</die-button>
   </div>
  </div>
  <div class="side zh">
   <label><input type="checkbox">高级选项</label>
   <die-button icon="keys">快捷键</die-button><die-button icon="gear">选项</die-button><die-button icon="info">关于</die-button><die-button icon="redx">退出</die-button>
  </div>
 </div>
</div>`);

/* ---------- taskbar ---------- */
define('task-item', `<style>
:host{display:block;width:88px;height:92px;padding:6px 4px}
button{width:80px;height:80px;border-radius:8px;flex-direction:column;padding-top:16px;justify-content:flex-start;gap:8px}
i{width:12px;height:6px;border-radius:3px;background:#9a9a9a;visibility:hidden}
:host([run]) i{visibility:visible}
:host([alert]) button{background:#84464c}
:host([alert]) i{width:64px;background:#ff9aa4}
:host([active]) button{background:#283638;box-shadow:inset 0 0 0 2px #2f3d3f}
:host([active]) i{width:32px;background:#4cc2ff}
</style><button type="button"><i></i></button>`, (el, r) => {
  const b = r.querySelector('button');
  b.setAttribute('aria-label', el.getAttribute('icon'));
  b.insertAdjacentHTML('afterbegin', `<ui-icon name="${el.getAttribute('icon')}"></ui-icon>`);
});
define('task-bar', `<style>
:host{display:flex;height:94px;border-top:2px solid #44474a;background:linear-gradient(90deg,#1e2124,#1f2528 35%,#242225 47%,#152a2f 57%,#16292b 66%,#202424 73%,#1e2428 82%,#202223);color:#fff}
nav{display:flex;margin-left:584px}
.tray{margin-left:auto;display:flex;align-items:center;padding-right:37px}
.tray>*{margin-right:16px}
.tray b{font-weight:400;font-size:30px;margin:0 34px 0 16px}
.clock{text-align:right;line-height:32px;margin:0 0 0 16px;padding-bottom:2px}
</style>
<nav><task-item icon="start"></task-item><task-item icon="tview"></task-item><task-item icon="copilot"></task-item><task-item icon="explorer" run></task-item><task-item icon="edge"></task-item><task-item icon="store"></task-item><task-item icon="chrome" run></task-item><task-item icon="co" run></task-item><task-item icon="vscode" run></task-item><task-item icon="word" run></task-item><task-item icon="ie" run></task-item><task-item icon="qq" run alert></task-item><task-item icon="onefox" run></task-item><task-item icon="bolt" run></task-item><task-item icon="de" run active></task-item><task-item icon="app" run></task-item></nav>
<div class="tray"><ui-icon name="tup" style="margin-right:37px"></ui-icon><ui-icon name="cop"></ui-icon><b>英</b><ui-icon name="wifi"></ui-icon><ui-icon name="vol"></ui-icon><ui-icon name="batt"></ui-icon><div class="clock">9:59<br>2025/8/15</div></div>`);

define('desk-top', `<style>
:host{display:grid;grid-template-rows:minmax(0,1fr) auto;height:100vh;position:relative;overflow:hidden}
explorer-window{position:absolute;left:0;top:0;right:523px}
die-window{position:absolute;left:1129px;top:231px;right:89px}
task-bar{position:relative}
</style><browser-window></browser-window><explorer-window></explorer-window><die-window></die-window><task-bar></task-bar>`);
</script>
</body>
</html>
